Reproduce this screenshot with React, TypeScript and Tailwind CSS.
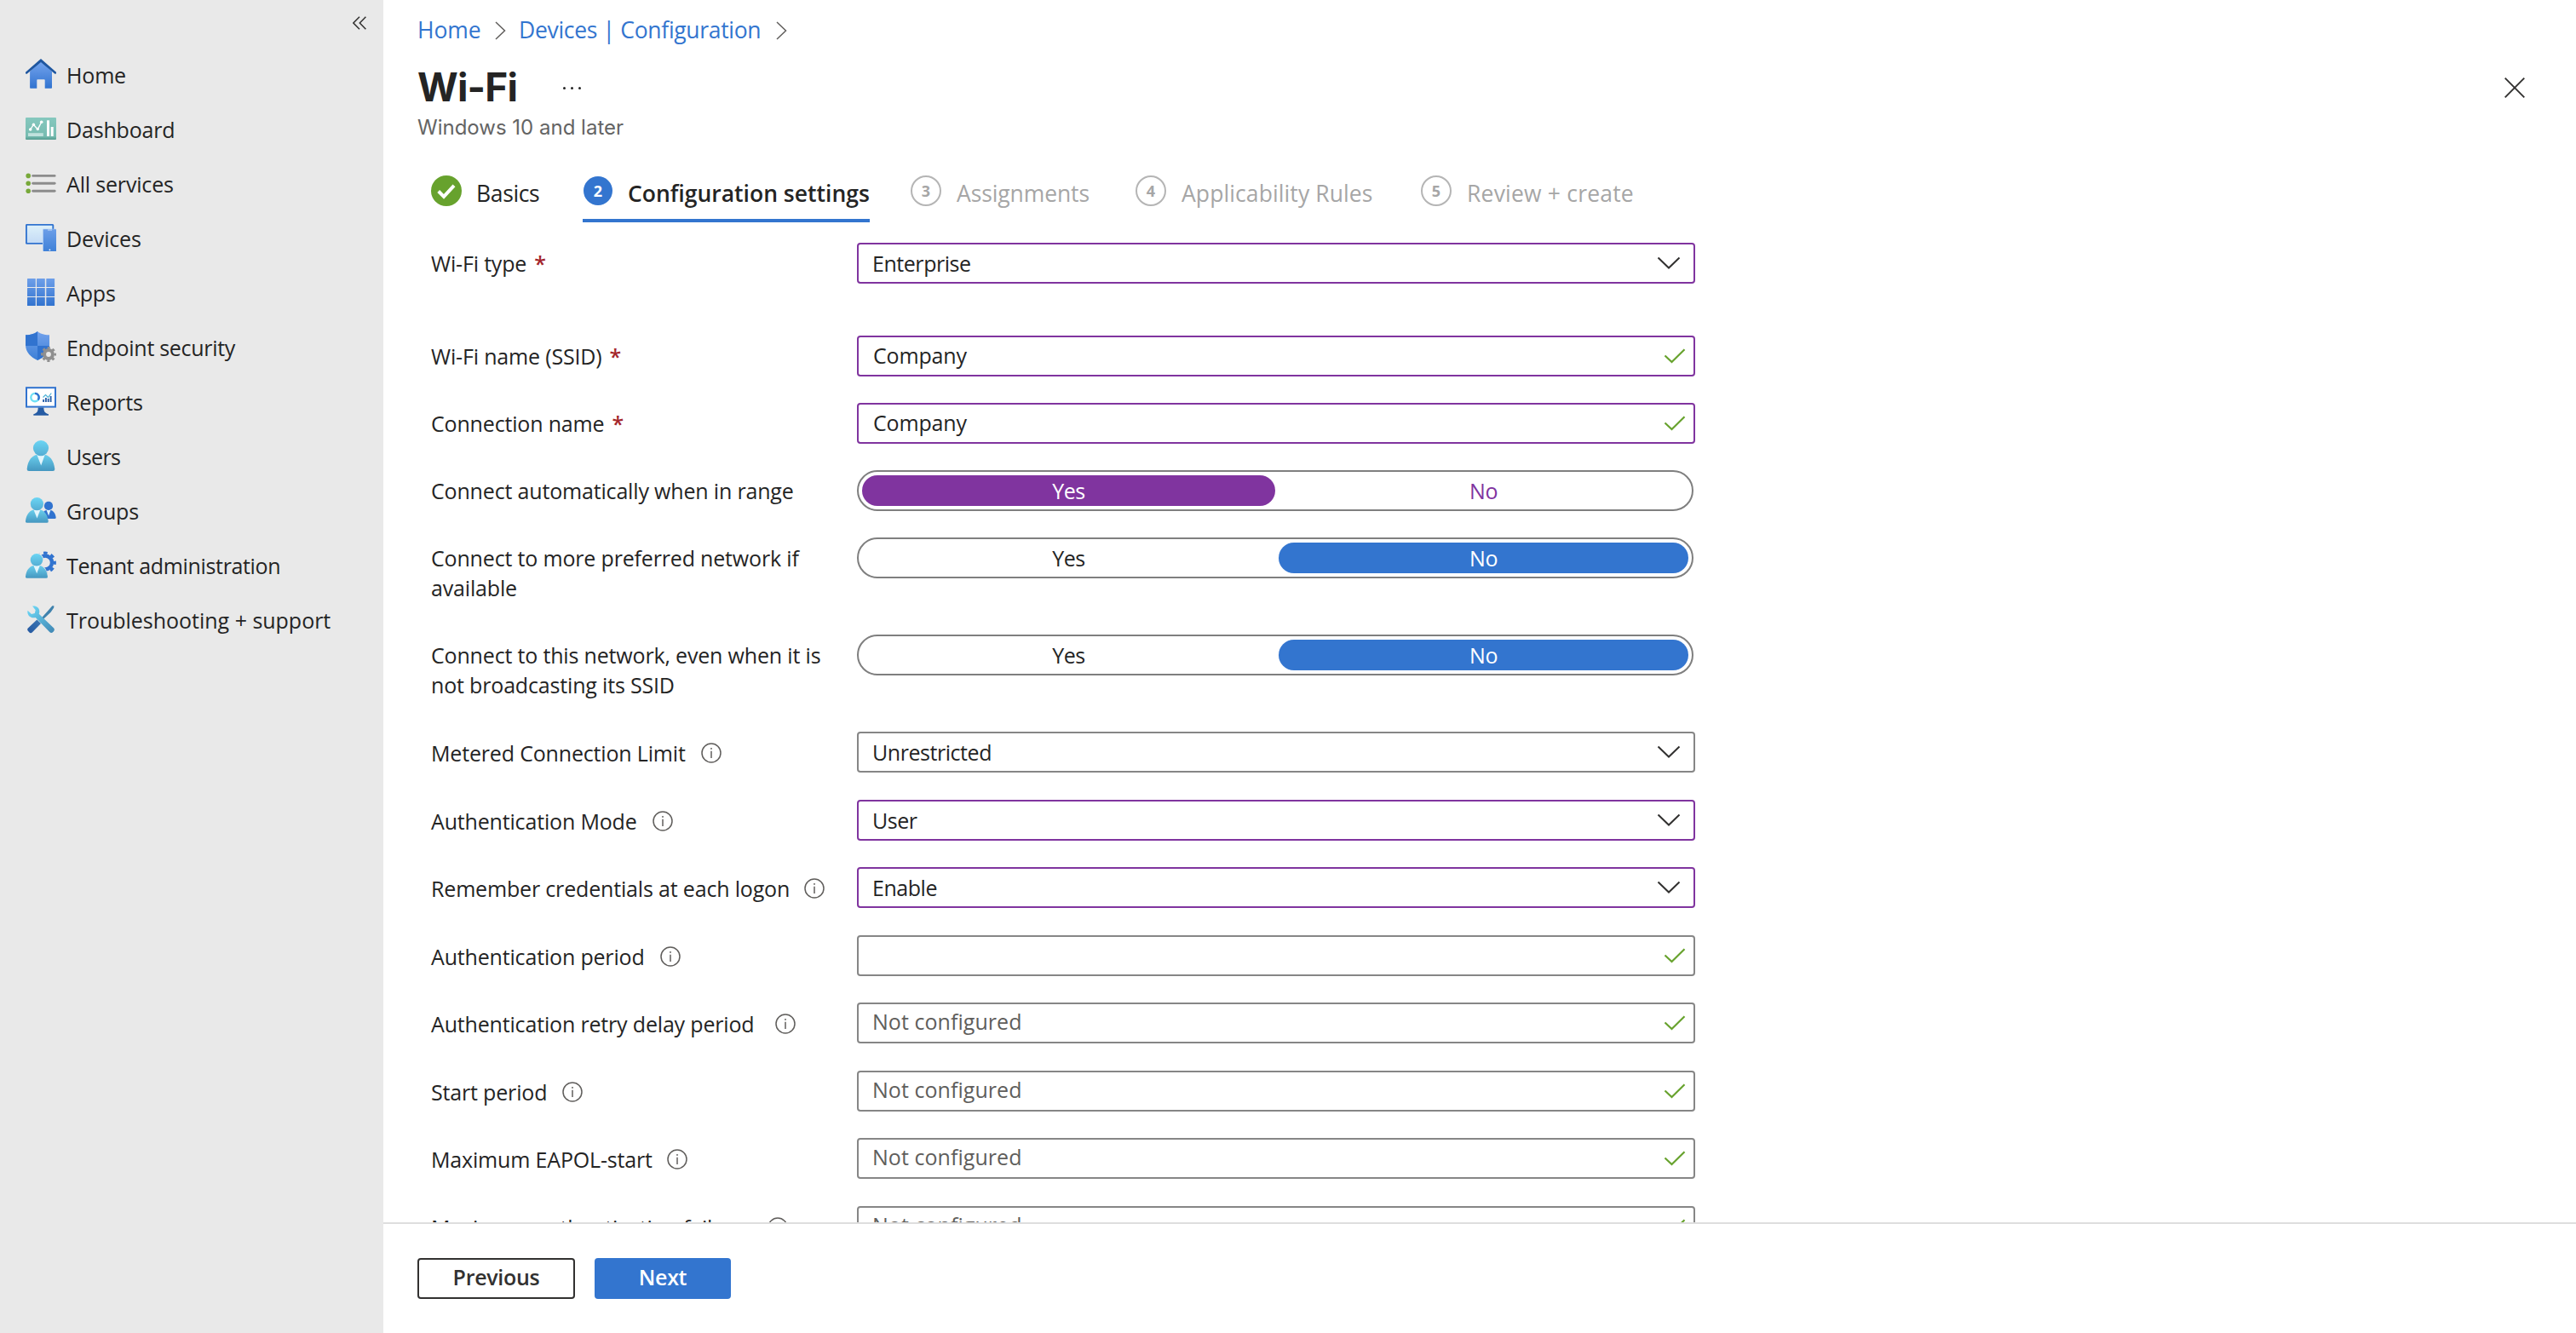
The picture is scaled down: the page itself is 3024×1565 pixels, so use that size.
import type { ReactNode } from "react";

/* ---------- sidebar icons (36x36) ---------- */

const HomeIcon = () => (
  <svg width="36" height="36" viewBox="0 0 36 36">
    <defs>
      <linearGradient id="home" x1="0" y1="0" x2="0" y2="1">
        <stop offset="0" stopColor="#76a5ee" />
        <stop offset="1" stopColor="#3173cf" />
      </linearGradient>
    </defs>
    <path d="M18 2.5 31 15v19a.8.8 0 0 1-.8.8h-7.5V25a.8.8 0 0 0-.8-.8h-7.8a.8.8 0 0 0-.8.8v9.8H5.9a.8.8 0 0 1-.8-.8V15z" fill="url(#home)" />
    <path d="M18 0 36 15.8v1.6l-1.6.4L18 4 1.6 17.8 0 17.4v-1.6z" fill="#1f57a0" />
  </svg>
);

const DashboardIcon = () => (
  <svg width="36" height="36" viewBox="0 0 36 36">
    <defs>
      <linearGradient id="dash" x1="0" y1="0" x2="0" y2="1">
        <stop offset="0" stopColor="#86c8be" />
        <stop offset="0.85" stopColor="#76bbb0" />
        <stop offset="1" stopColor="#559d90" />
      </linearGradient>
    </defs>
    <rect y="5" width="36" height="26" rx="1" fill="url(#dash)" />
    <path d="m5.7 19 3.6-5.7 5 5.4 4.4-8.4" fill="none" stroke="#fff" strokeWidth="1.4" />
    <circle cx="5.7" cy="19" r="1.8" fill="#fff" />
    <circle cx="9.4" cy="13.3" r="1.7" fill="#fff" />
    <circle cx="14.3" cy="18.5" r="1.7" fill="#fff" />
    <circle cx="18.7" cy="10.2" r="1.8" fill="#fff" />
    <rect x="3" y="23.2" width="17.8" height="3.8" fill="#c0e2dd" />
    <rect x="25" y="8.3" width="3" height="18.7" fill="#fff" />
    <rect x="29.7" y="16" width="3" height="11" fill="#fff" />
  </svg>
);

const ServicesIcon = () => (
  <svg width="36" height="36" viewBox="0 0 36 36">
    {[9.4, 18.2, 27.3].map((y) => (
      <g key={y}>
        <circle cx="3.2" cy={y} r="2.8" fill="#78a93a" />
        <path d={`M8.7 ${y}h25.4`} stroke="#8c8c8c" strokeWidth="2.9" strokeLinecap="round" />
      </g>
    ))}
  </svg>
);

const DevicesIcon = () => (
  <svg width="36" height="36" viewBox="0 0 36 36">
    <defs>
      <linearGradient id="tablet" x1="0" y1="0" x2="0" y2="1">
        <stop offset="0" stopColor="#def1fa" />
        <stop offset="1" stopColor="#c3daf5" />
      </linearGradient>
      <linearGradient id="phone" x1="0" y1="0" x2="0" y2="1">
        <stop offset="0" stopColor="#6b9ee8" />
        <stop offset="1" stopColor="#3f81d8" />
      </linearGradient>
    </defs>
    <rect x="0.9" y="2.9" width="31.4" height="22" rx="0.6" fill="url(#tablet)" stroke="#3173cf" strokeWidth="1.9" />
    <rect x="20" y="7.8" width="16" height="26.2" rx="0.8" fill="#a9c8f0" />
    <rect x="21" y="8.3" width="15" height="25.7" rx="0.6" fill="url(#phone)" />
    <rect x="26" y="8.4" width="5" height="1.2" fill="#b9d3f5" />
    <circle cx="28.4" cy="32.3" r="0.9" fill="#fff" />
  </svg>
);

const AppsIcon = () => (
  <svg width="36" height="36" viewBox="0 0 36 36">
    <defs>
      <linearGradient id="apps" gradientUnits="userSpaceOnUse" x1="0" y1="2" x2="0" y2="34">
        <stop offset="0" stopColor="#6e9fe9" />
        <stop offset="1" stopColor="#3173cf" />
      </linearGradient>
    </defs>
    {[2, 12.9, 24].map((y) =>
      [2, 13, 24.3].map((x) => <rect key={`${x}-${y}`} x={x} y={y} width="9.8" height="10" rx="0.5" fill="url(#apps)" />)
    )}
  </svg>
);

const ShieldIcon = () => (
  <svg width="36" height="36" viewBox="0 0 36 36">
    <defs>
      <linearGradient id="shieldLight" gradientUnits="userSpaceOnUse" x1="0" y1="0" x2="0" y2="34">
        <stop offset="0" stopColor="#73a2ec" />
        <stop offset="1" stopColor="#3c7fd6" />
      </linearGradient>
      <clipPath id="shieldShape">
        <path d="M14 0c3 2.9 7 4 14 4.3V16c0 8.5-6.500 14.5-14 18C6.500 30.5 0 24.5 0 16V4.300C7 4 11 2.900 14 0z" />
      </clipPath>
    </defs>
    <g clipPath="url(#shieldShape)">
      <rect width="28" height="34" fill="url(#shieldLight)" />
      <rect width="14" height="17" fill="#3173cf" />
      <rect x="14" y="17" width="14" height="17" fill="#3173cf" />
    </g>
    <circle cx="27" cy="27" r="7.7" fill="none" stroke="#8f8f8f" strokeWidth="2.6" strokeDasharray="3.1 2.947" strokeDashoffset="1.55" />
    <circle cx="27" cy="27" r="4.9" fill="#e9e9e9" stroke="#8f8f8f" strokeWidth="4" />
  </svg>
);

const ReportsIcon = () => (
  <svg width="36" height="36" viewBox="0 0 36 36">
    <rect x="1" y="2.2" width="34" height="22.4" fill="#fff" stroke="#3173cf" strokeWidth="2" />
    <circle cx="11" cy="13.6" r="4.7" fill="none" stroke="#6fe0f5" strokeWidth="2.4" />
    <path d="M11 8.900a4.700 4.700 0 0 1 3.600 7.700" fill="none" stroke="#3173cf" strokeWidth="2.4" />
    <path d="M21.100 19v-3M23.900 19v-5M26.700 19v-4M29.600 19v-7" stroke="#2a5fa8" strokeWidth="1.9" />
    <path d="m20.500 13.500 3-3 3 3 3.800-5" fill="none" stroke="#4fb3d6" strokeWidth="1.2" />
    <path d="M14.700 25.500h6.600c.2 4 1 6.500 5.700 7.700v1.500H9.300v-1.500c4.600-1.200 5.300-3.700 5.400-7.700z" fill="#255ba3" />
  </svg>
);

const PersonGradient = ({ id }: { id: string }) => (
  <defs>
    <linearGradient id={`${id}Head`} x1="0" y1="0" x2="0" y2="1">
      <stop offset="0" stopColor="#6bd5f4" />
      <stop offset="1" stopColor="#54add3" />
    </linearGradient>
    <linearGradient id={`${id}Body`} x1="0" y1="0" x2="0" y2="1">
      <stop offset="0" stopColor="#6bd0ee" />
      <stop offset="1" stopColor="#4597c0" />
    </linearGradient>
  </defs>
);

const UsersIcon = () => (
  <svg width="36" height="36" viewBox="0 0 36 36">
    <PersonGradient id="user" />
    <path d="M4 36a2.300 2.300 0 0 1-2.300-2.600C2.700 24 7 16.200 18 16.200S33.300 24 34.300 33.400A2.300 2.300 0 0 1 32 36z" fill="url(#userBody)" />
    <path d="M13.400 17 18.200 29.500 22.700 17z" fill="#e3f5fc" />
    <circle cx="18" cy="9.1" r="9.1" fill="url(#userHead)" />
  </svg>
);

const GroupsIcon = () => (
  <svg width="36" height="36" viewBox="0 0 36 36">
    <PersonGradient id="group" />
    <path d="M19 28h15.500a1.200 1.200 0 0 0 1.200-1.400C35 21.500 32.500 17.500 27 17.500s-8 4-8 10.500z" fill="#3173cf" />
    <path d="m24.400 17.500 2.700 7 2.400-7z" fill="#e3f5fc" />
    <circle cx="27" cy="12.9" r="5.1" fill="#3173cf" />
    <path d="M1.800 32.700A1.800 1.800 0 0 1 0 30.600C1 23 4.600 17 13.400 17S25.700 23 26.700 30.600a1.800 1.800 0 0 1-1.800 2.100z" fill="url(#groupBody)" />
    <path d="m9.500 17.500 4 10 3.800-10z" fill="#e3f5fc" />
    <circle cx="13.4" cy="10.7" r="7.6" fill="url(#groupHead)" />
  </svg>
);

const TenantIcon = () => (
  <svg width="36" height="36" viewBox="0 0 36 36">
    <PersonGradient id="tenant" />
    <circle cx="23" cy="15.5" r="11.3" fill="none" stroke="#3173cf" strokeWidth="3.2" strokeDasharray="4.6 4.275" strokeDashoffset="2.3" />
    <circle cx="23" cy="15.5" r="8" fill="none" stroke="#3173cf" strokeWidth="4.4" />
    <circle cx="13" cy="12.4" r="8.2" fill="#e9e9e9" />
    <path d="M0 33.700v-4C1.500 22 5 17 13 17s11 5 12.700 12v4.700z" fill="#e9e9e9" />
    <path d="M1.800 33.700A1.800 1.800 0 0 1 0 31.600C1 24.500 4.500 18.500 13 18.500S24.900 24.500 25.900 31.600a1.800 1.800 0 0 1-1.800 2.100z" fill="url(#tenantBody)" />
    <path d="m9.300 18.800 3.900 9.400 3.700-9.400z" fill="#e3f5fc" />
    <circle cx="13" cy="12.3" r="7.3" fill="url(#tenantHead)" />
  </svg>
);

const ToolsIcon = () => (
  <svg width="36" height="36" viewBox="0 0 36 36">
    <defs>
      <linearGradient id="wrench" gradientUnits="userSpaceOnUse" x1="6" y1="4" x2="32" y2="34">
        <stop offset="0" stopColor="#6bd5f4" />
        <stop offset="1" stopColor="#4188b5" />
      </linearGradient>
      <linearGradient id="driver" x1="1" y1="0" x2="0" y2="1">
        <stop offset="0" stopColor="#3b78b5" />
        <stop offset="1" stopColor="#2457a0" />
      </linearGradient>
    </defs>
    <path d="m31.400 2.200 2 .1-.2 2.100-3.600 5.400-9.800 9.200-1.700-1.700 8.700-9.800z" fill="#3f82ad" />
    <path d="M13.400 18.400 18 23 8 33.200a2.700 2.700 0 0 1-3.800 0L3.100 32.100a2.700 2.700 0 0 1 0-3.800z" fill="url(#driver)" />
    <path
      d="M8 2.600c3.800-1 8.300 1.400 8.300 6.200 0 1.300-.2 2.100-.6 3L33 28.300c1.200 1.200 1.100 2.900 0 4l-.7.700c-1.200 1.200-3 1.200-4.100 0L11.700 15.900c-1 .3-1.500.4-2.200.4-5 0-8-4.300-7-8.600l4.500 4.200 3.800-.8.900-3.800z"
      fill="url(#wrench)"
    />
  </svg>
);

/* ---------- small glyphs ---------- */

const Crumb = () => (
  <svg width="13" height="22" viewBox="0 0 13 22" fill="none" stroke="#605e5c" strokeWidth="1.5">
    <path d="M1 1 11.500 11 1 21" />
  </svg>
);

const ChevronDown = () => (
  <svg width="28" height="16" viewBox="0 0 28 16" fill="none" stroke="#323130" strokeWidth="2">
    <path d="m1.500 1.500 12.500 12 12.500-12" />
  </svg>
);

const Check = () => (
  <svg width="26" height="18" viewBox="0 0 26 18" fill="none" stroke="#67a22d" strokeWidth="2.2">
    <path d="m1.500 8.500 8 7.500L24.500 1.200" />
  </svg>
);

const Info = () => (
  <svg width="24" height="24" viewBox="0 0 24 24" fill="none" stroke="#605e5c">
    <circle cx="12" cy="12" r="11" strokeWidth="1.5" />
    <path d="M12 9.700V18" strokeWidth="1.5" />
    <circle cx="12" cy="6.9" r="0.6" fill="#605e5c" strokeWidth="0.8" />
  </svg>
);

/* ---------- data ---------- */

const nav = [
  { label: "Home", icon: <HomeIcon /> },
  { label: "Dashboard", icon: <DashboardIcon /> },
  { label: "All services", icon: <ServicesIcon /> },
  { label: "Devices", icon: <DevicesIcon /> },
  { label: "Apps", icon: <AppsIcon /> },
  { label: "Endpoint security", icon: <ShieldIcon />, text: "tracking-[-0.3px]" },
  { label: "Reports", icon: <ReportsIcon /> },
  { label: "Users", icon: <UsersIcon />, text: "tracking-[-0.6px]" },
  { label: "Groups", icon: <GroupsIcon /> },
  { label: "Tenant administration", icon: <TenantIcon />, text: "tracking-[-0.35px]" },
  { label: "Troubleshooting + support", icon: <ToolsIcon />, text: "tracking-[-0.02px]" },
];

const upcoming = [
  { n: 3, label: "Assignments", box: "w-[264px]", text: "tracking-[-0.1px]" },
  { n: 4, label: "Applicability Rules", box: "w-[335px]", text: "tracking-[0.1px]" },
  { n: 5, label: "Review + create", box: "w-[260px]", text: "tracking-[0.2px]" },
];

/* ---------- form pieces ---------- */

type RowProps = {
  label: string;
  required?: boolean;
  // space between the label and its info icon
  info?: string;
  height?: string;
  children: ReactNode;
};

const Row = ({ label, required, info, height = "h-[79px]", children }: RowProps) => (
  <div className={`flex shrink-0 ${height}`}>
    <div className={`flex w-[500px] shrink-0 items-start leading-[35px] ${info ? "pt-2" : "pt-[7px]"}`}>
      <span className={info ? "whitespace-nowrap" : "max-w-[470px]"}>
        {label}
        {required && <span className="ml-[9px] leading-none font-semibold text-[#a4262c]">*</span>}
      </span>
      {info && (
        <span className={`mt-[5px] ${info}`}>
          <Info />
        </span>
      )}
    </div>
    {children}
  </div>
);

type FieldProps = { value?: string; changed?: boolean; placeholder?: boolean; select?: boolean };

const Field = ({ value, changed, placeholder, select }: FieldProps) => (
  <div
    className={`flex h-12 w-[984px] items-center justify-between rounded-[4px] border-2 bg-white pl-4 ${
      select ? "pr-[15px] tracking-[-0.45px]" : "pr-[9px]"
    } ${changed ? "border-[#80349f]" : "border-[#868686]"}`}
  >
    <span className={placeholder ? "-mt-[2px] tracking-[0.05px] text-[#605e5c]" : select ? "pt-px" : "pl-px"}>{value}</span>
    {select ? <ChevronDown /> : <Check />}
  </div>
);

const Toggle = ({ value, changed }: { value: "Yes" | "No"; changed?: boolean }) => {
  const on = changed ? "bg-[#80349f] text-white" : "bg-[#3375cf] text-white";
  const off = changed ? "text-[#80349f]" : "";
  return (
    <div className="flex h-12 w-[982px] items-center justify-between rounded-full border-2 border-[#7f7f7f] bg-white px-1 text-center leading-9 tracking-[-0.4px]">
      <span className={`h-9 w-[485px] rounded-full ${value === "Yes" ? on : off}`}>Yes</span>
      <span className={`h-9 w-[481px] rounded-full ${value === "No" ? on : off}`}>No</span>
    </div>
  );
};

/* ---------- page ---------- */

export default function App() {
  return (
    <div className="flex h-[1565px] w-[3024px] overflow-hidden bg-white font-['Open_Sans','Noto_Sans',sans-serif] text-[25px] tracking-[-0.17px] text-[#242424]">
      <aside className="flex w-[450px] shrink-0 flex-col bg-[#e9e9e9]">
        <div className="flex h-[55px] shrink-0 justify-end pt-[19px] pr-5">
          <svg width="16" height="16" viewBox="0 0 16 16" fill="none" stroke="#323130" strokeWidth="1.5">
            <path d="M8 .8.900 8 8 15.200M15.400.8 8.300 8l7.100 7.200" />
          </svg>
        </div>
        {nav.map((item) => (
          <div key={item.label} className="flex h-16 shrink-0 items-center pl-[30px]">
            {item.icon}
            <span className={`ml-3 pt-[2px] leading-9 whitespace-nowrap ${item.text ?? ""}`}>{item.label}</span>
          </div>
        ))}
      </aside>

      <main className="flex min-w-0 flex-1 flex-col">
        <div className="flex h-[1435px] shrink-0 flex-col overflow-hidden">
          <div className="flex h-[70px] shrink-0 items-center pl-10 text-[26.5px] leading-9 tracking-[-0.1px] text-[#3375cf]">
            <span className="w-[75px]">Home</span>
            <span className="mr-[15px] ml-[16px] pt-[2px]">
              <Crumb />
            </span>
            <span className="w-[286px] tracking-[-0.32px]">Devices | Configuration</span>
            <span className="ml-[16px] pt-[2px]">
              <Crumb />
            </span>
          </div>

          <div className="flex h-[126px] shrink-0 justify-between pr-[60px] pl-10 font-[Inter,sans-serif]">
            <div>
              <div className="flex h-16 items-center">
                <h1 className="text-[46px] leading-[64px] font-bold tracking-[-0.8px]">Wi-Fi</h1>
                <div className="ml-[54px] flex gap-[6px] pt-[3px]">
                  <i className="size-[3px] rounded-full bg-[#242424]" />
                  <i className="size-[3px] rounded-full bg-[#242424]" />
                  <i className="size-[3px] rounded-full bg-[#242424]" />
                </div>
              </div>
              <p className="text-[24px] leading-[32px] tracking-normal text-[#646464]">Windows 10 and later</p>
            </div>
            <svg className="mt-[21px]" width="24" height="24" viewBox="0 0 24 24" stroke="#323130" strokeWidth="1.9">
              <path d="m.7.7 22.600 22.600M23.300.7.7 23.300" />
            </svg>
          </div>

          <div className="flex h-[89px] shrink-0 pl-14 text-[26.5px] leading-9 tracking-normal whitespace-nowrap">
            <div className="flex h-[65px] w-[178px]">
              <svg className="mt-[10px]" width="36" height="36" viewBox="0 0 36 36">
                <circle cx="18" cy="18" r="18" fill="#67a22d" />
                <path d="m8.700 18.500 6.300 6.300 12-13" fill="none" stroke="#fff" strokeWidth="4" />
              </svg>
              <span className="mt-[13px] ml-[17px] tracking-[-0.35px]">Basics</span>
            </div>
            <div className="mr-12 flex h-[65px] w-[337px] border-b-4 border-[#3375cf]">
              <span className="mt-[11px] ml-px size-[34px] rounded-full bg-[#3375cf] text-center text-[18px] leading-[34px] font-bold text-white">2</span>
              <span className="mt-[13px] ml-[18px] font-semibold">Configuration settings</span>
            </div>
            {upcoming.map((s) => (
              <div key={s.n} className={`flex h-[65px] text-[#a6a6a6] ${s.box}`}>
                <span className="mt-[10px] size-9 rounded-full border-2 border-[#b5b5b5] text-center text-[18px] leading-[32px] font-bold">{s.n}</span>
                <span className={`mt-[13px] ml-[18px] ${s.text}`}>{s.label}</span>
              </div>
            ))}
          </div>

          <div className="flex flex-col pl-14">
            <Row label="Wi-Fi type" required height="h-[109px]">
              <Field value="Enterprise" changed select />
            </Row>
            <Row label="Wi-Fi name (SSID)" required>
              <Field value="Company" changed />
            </Row>
            <Row label="Connection name" required>
              <Field value="Company" changed />
            </Row>
            <Row label="Connect automatically when in range">
              <Toggle value="Yes" changed />
            </Row>
            <Row label="Connect to more preferred network if available" height="h-[114px]">
              <Toggle value="No" />
            </Row>
            <Row label="Connect to this network, even when it is not broadcasting its SSID" height="h-[114px]">
              <Toggle value="No" />
            </Row>
            <Row label="Metered Connection Limit" info="ml-[18px]" height="h-20">
              <Field value="Unrestricted" select />
            </Row>
            <Row label="Authentication Mode" info="ml-[18px]">
              <Field value="User" changed select />
            </Row>
            <Row label="Remember credentials at each logon" info="ml-[17px]" height="h-20">
              <Field value="Enable" changed select />
            </Row>
            <Row label="Authentication period" info="ml-[18px]">
              <Field />
            </Row>
            <Row label="Authentication retry delay period" info="ml-[25px]" height="h-20">
              <Field value="Not configured" placeholder />
            </Row>
            <Row label="Start period" info="ml-[18px]">
              <Field value="Not configured" placeholder />
            </Row>
            <Row label="Maximum EAPOL-start" info="ml-[17px]" height="h-20">
              <Field value="Not configured" placeholder />
            </Row>
            <Row label="Maximum authentication failures" info="ml-[14px]">
              <Field value="Not configured" placeholder />
            </Row>
          </div>
        </div>

        <footer className="flex flex-1 items-start gap-[23px] border-t-2 border-[#dedede] pt-10 pl-10 font-semibold tracking-[-0.3px]">
          <button className="h-12 w-[185px] rounded-[4px] border-2 border-[#323130] pb-[3px] text-[#323130]">Previous</button>
          <button className="h-12 w-40 rounded-[4px] bg-[#3375cf] pb-[3px] text-white">Next</button>
        </footer>
      </main>
    </div>
  );
}
